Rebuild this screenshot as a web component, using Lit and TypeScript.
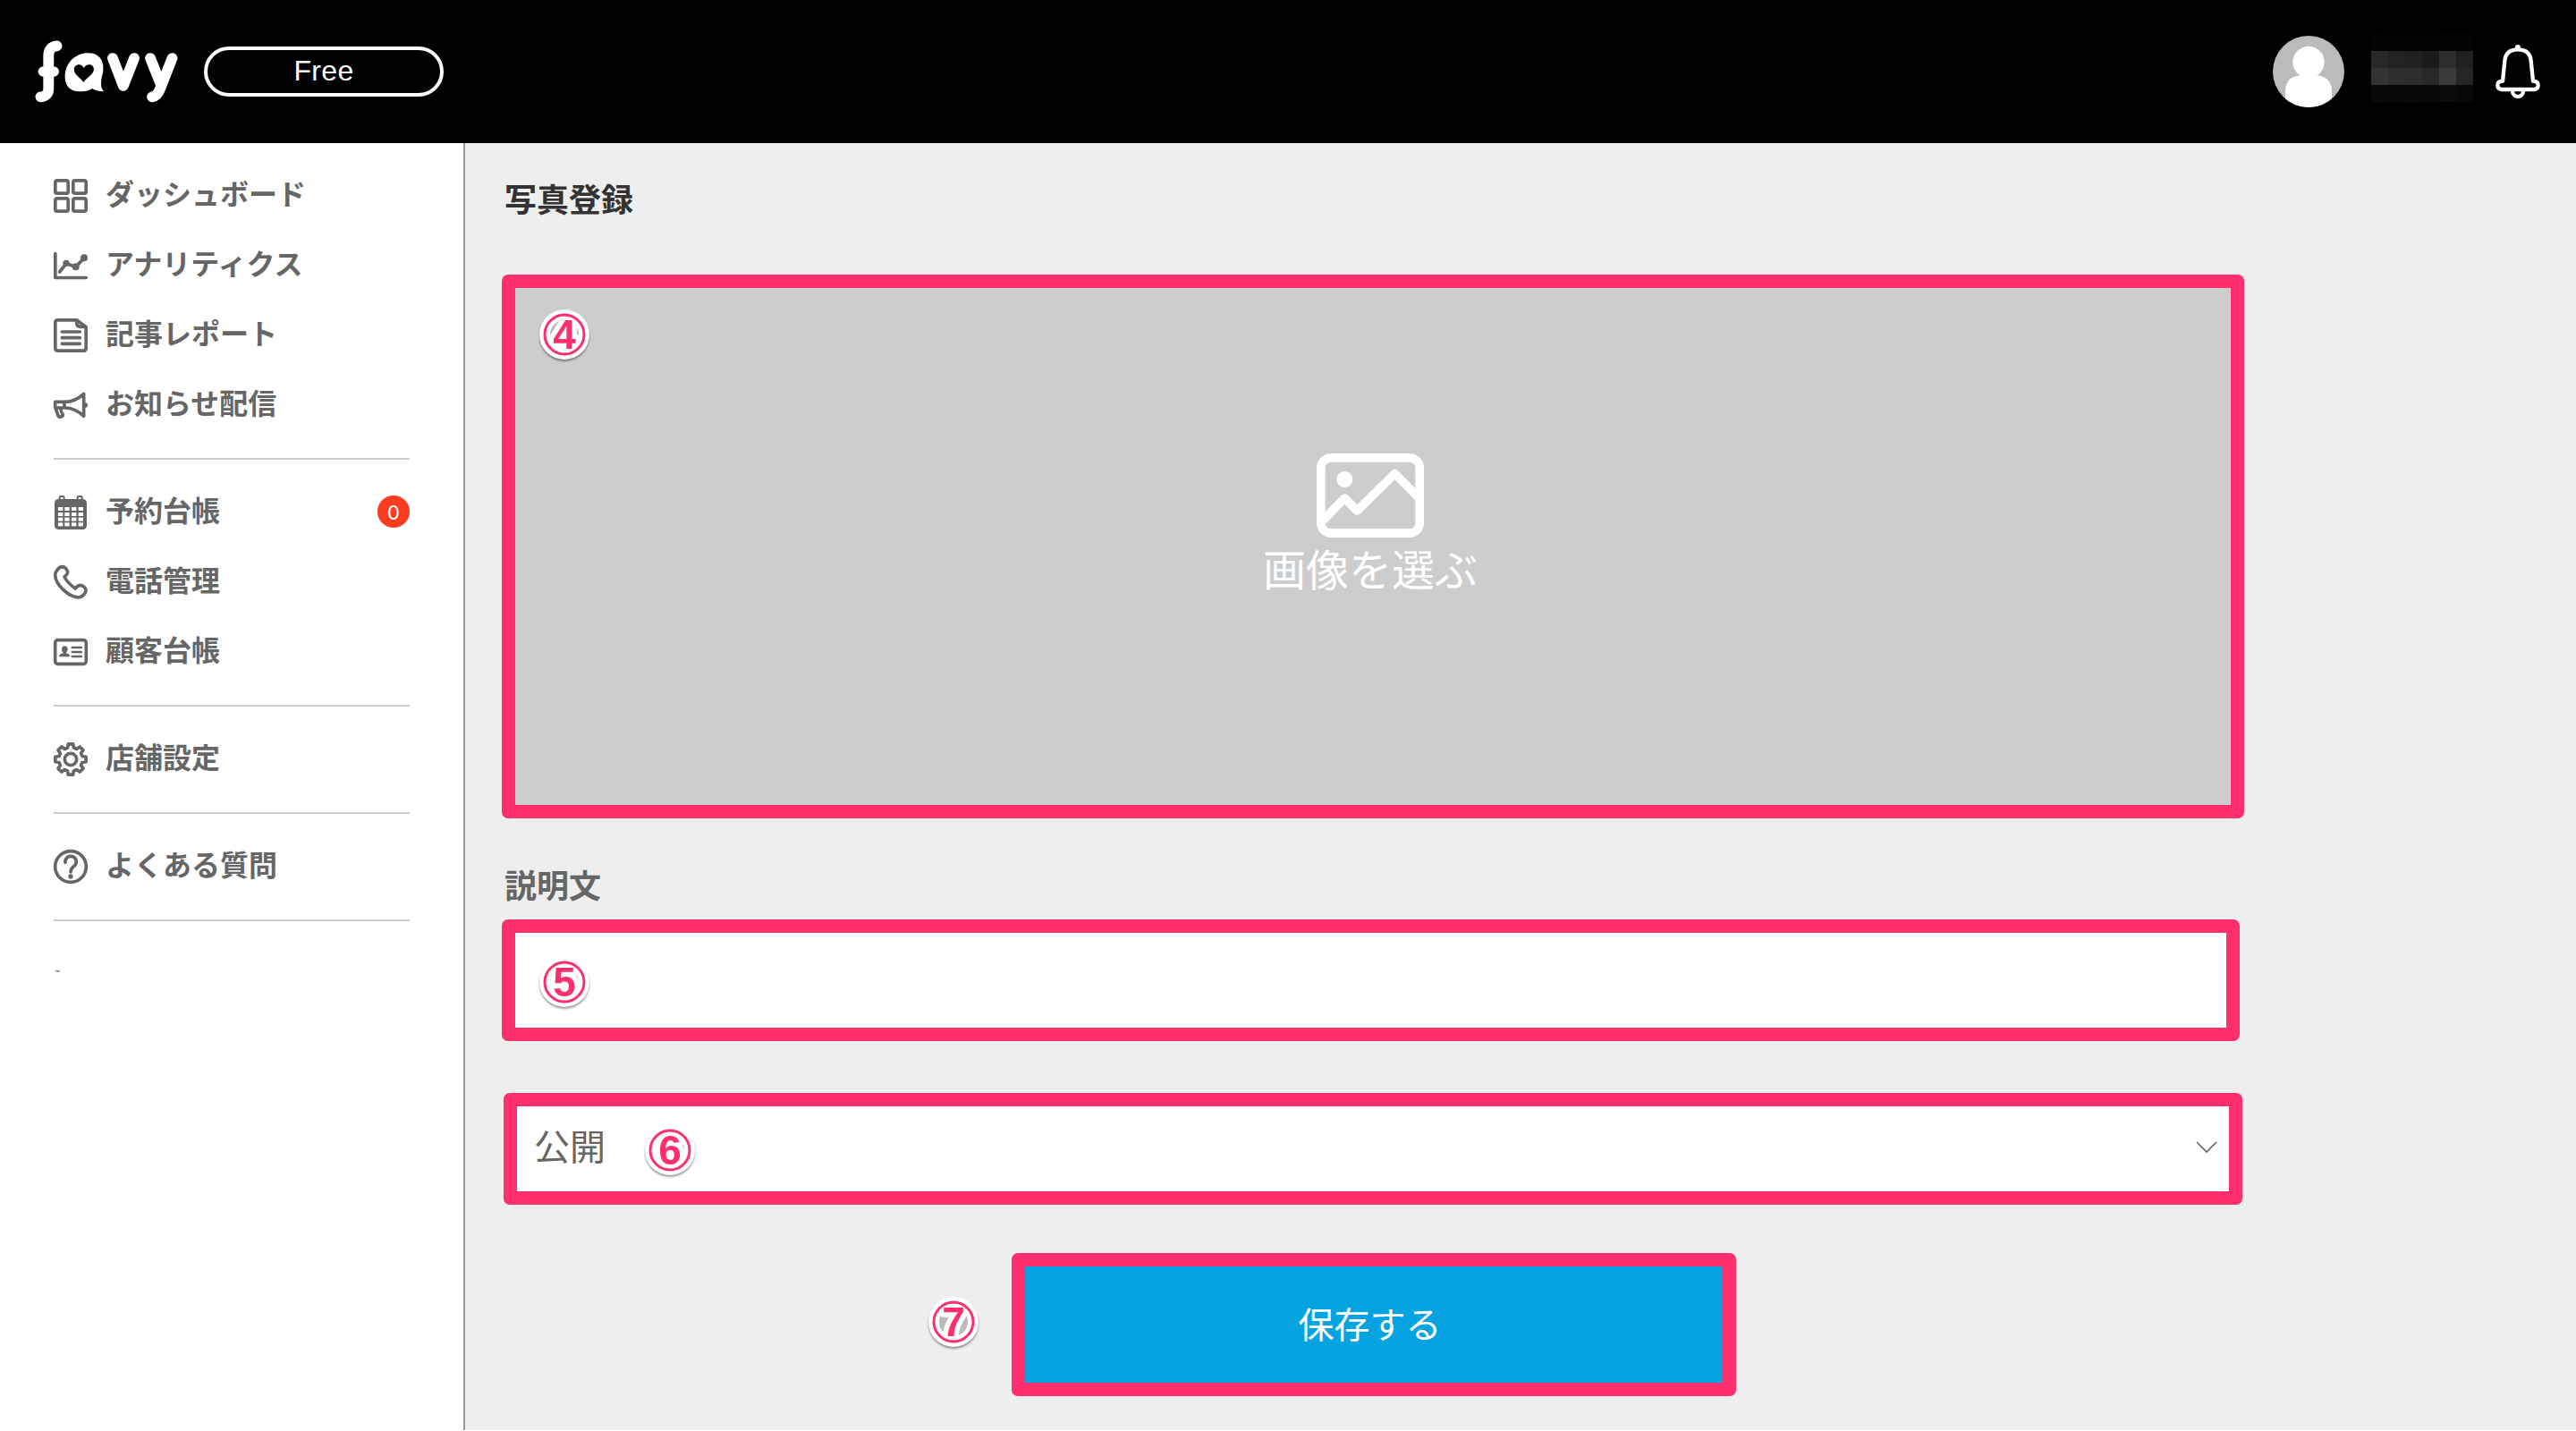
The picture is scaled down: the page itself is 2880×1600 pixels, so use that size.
import { LitElement, html, css, svg, nothing } from 'lit';
import { customElement, property } from 'lit/decorators.js';

// Outline of an eight-toothed gear centred on 57,57
const gearOutline = () => {
  const points: string[] = [];
  for (let i = 0; i < 8; i++) {
    for (const [offset, radius] of [[-15, 40], [-9, 52], [9, 52], [15, 40]]) {
      const a = ((i * 45 + offset) * Math.PI) / 180;
      points.push(`${(57 + radius * Math.sin(a)).toFixed(1)},${(57 - radius * Math.cos(a)).toFixed(1)}`);
    }
  }
  return points.join(' ');
};

const icons: Record<string, unknown> = {
  dashboard: svg`
    <rect x="5.5" y="5.5" width="43" height="43" rx="6" />
    <rect x="65.5" y="5.5" width="43" height="43" rx="6" />
    <rect x="5.5" y="65.5" width="43" height="43" rx="6" />
    <rect x="65.5" y="65.5" width="43" height="43" rx="6" />`,
  analytics: svg`
    <path d="M5.5 17V97.5H109" />
    <path d="M20 78L42 50L74 61L103 31" />
    <g class="fill"><circle cx="42" cy="49" r="11" /><circle cx="74" cy="61" r="12" /><circle cx="102" cy="31" r="12" /></g>`,
  report: svg`
    <path d="M14 5.5H77L108.5 29V100Q108.5 108.5 100 108.5H14Q5.5 108.5 5.5 100V14Q5.5 5.5 14 5.5Z" />
    <path d="M77 7V17Q78 28 90 28H106" />
    <path d="M28 45H88M28 65H88M28 85H88" />`,
  megaphone: svg`
    <path d="M5 46H36V66H5ZM36 46Q70 47 101 19V94Q70 65 36 66M7 68L14 90Q17 98 25 96Q34 92 30 87Q24 81 24 70" />
    <circle class="fill" cx="105" cy="57" r="9" />`,
  calendar: svg`
    <rect class="fill" x="3" y="12" width="108" height="102" rx="13" />
    <path class="thin" d="M20 16V7Q20 3 24 3H31Q35 3 35 7V16M80 16V7Q80 3 84 3H91Q95 3 95 7V16" />
    <g class="hole">
      ${[39, 57, 74, 91].map((y) => [15, 37, 60, 83].map((x) => svg`<rect x=${x} y=${y} width="16" height="12" />`))}
    </g>`,
  phone: svg`
    <path d="M10 19C16 10 24 5 29 5C38 6 46 15 47 24C47 30 42 33 36 39C44 54 58 68 73 78C78 71 82 67 90 67C99 68 108 76 108 85C107 95 95 108 83 108C50 106 6 66 5 33C5 27 6 24 10 19Z" />`,
  customer: svg`
    <rect x="5" y="17" width="104" height="80" rx="9" />
    <g class="fill"><ellipse cx="37" cy="48" rx="10" ry="11" /><path d="M17 73Q19 63 32 61V54H42V61Q53 63 55 73Z" /></g>
    <path class="line" d="M62 42H93M62 57H93M62 72H93" />`,
  gear: svg`<polygon points=${gearOutline()} /><circle cx="57" cy="57" r="20" />`,
  question: svg`
    <circle cx="57" cy="57" r="52" />
    <path d="M39 43A18.5 18.5 0 1 1 69 55Q57 63 57 75" />
    <circle class="fill" cx="57" cy="90" r="8" />`,
};

@customElement('nav-item')
export class NavItem extends LitElement {
  @property() icon = '';
  @property() label = '';
  @property() count?: string;

  static styles = css`
    :host {
      display: flex;
      align-items: center;
      height: 78px;
      color: #666;
    }

    svg {
      width: 38px;
      height: 38px;
      margin-right: 20px;
      overflow: visible;
      fill: none;
      stroke: #666;
      stroke-width: 11;
      stroke-linecap: round;
      stroke-linejoin: round;
    }

    .fill {
      fill: #666;
      stroke: none;
    }

    .hole {
      fill: #fff;
      stroke: none;
    }

    .thin {
      stroke-width: 6;
    }

    .line {
      stroke-width: 7;
    }

    .label {
      flex: 1;
      font-size: 32px;
      font-weight: bold;
      line-height: 44px;
      padding-bottom: 9px;
      white-space: nowrap;
    }

    .count {
      width: 36px;
      height: 36px;
      margin-bottom: 2px;
      border-radius: 50%;
      background: #fb3c22;
      color: #fff;
      font: 22px/38px Inter, sans-serif;
      text-align: center;
    }
  `;

  render() {
    return html`
      <svg viewBox="0 0 114 114">${icons[this.icon]}</svg>
      <span class="label">${this.label}</span>
      ${this.count ? html`<span class="count">${this.count}</span>` : nothing}
    `;
  }
}

@customElement('step-mark')
export class StepMark extends LitElement {
  @property() number = '';

  static styles = css`
    :host {
      position: absolute;
      width: 56px;
      height: 56px;
      filter: drop-shadow(0 2px 1px rgba(0, 0, 0, 0.4));
    }

    svg {
      display: block;
      overflow: visible;
    }

    .disc {
      fill: #fff;
    }

    .shade {
      fill: #bbb;
    }

    .ring {
      fill: none;
      stroke: #ff2f6e;
      stroke-width: 3;
    }

    text {
      fill: #ff2f6e;
      stroke: #fff;
      stroke-width: 11px;
      stroke-linejoin: round;
      paint-order: stroke fill;
      font: bold 46px 'Liberation Sans', sans-serif;
      text-anchor: middle;
    }
  `;

  render() {
    return html`
      <svg width="56" height="56" viewBox="0 0 56 56">
        <circle class="disc" cx="28" cy="28" r="28" />
        <circle class="shade" cx="28" cy="28" r="16" />
        <text x="28" y="44">${this.number}</text>
        <circle class="ring" cx="28" cy="28" r="22" />
      </svg>
    `;
  }
}

const menu = [
  [
    { icon: 'dashboard', label: 'ダッシュボード' },
    { icon: 'analytics', label: 'アナリティクス' },
    { icon: 'report', label: '記事レポート' },
    { icon: 'megaphone', label: 'お知らせ配信' },
  ],
  [
    { icon: 'calendar', label: '予約台帳', count: '0' },
    { icon: 'phone', label: '電話管理' },
    { icon: 'customer', label: '顧客台帳' },
  ],
  [{ icon: 'gear', label: '店舗設定' }],
  [{ icon: 'question', label: 'よくある質問' }],
];

// Grey levels of the masked user name, row by row
const mask = [
  [3, 2, 2, 2, 4, 3],
  [40, 35, 33, 26, 45, 32],
  [51, 46, 46, 40, 58, 37],
  [9, 8, 9, 8, 11, 8],
];

@customElement('app-root')
export class AppRoot extends LitElement {
  static styles = css`
    :host {
      display: flex;
      flex-direction: column;
      width: 2880px;
      height: 1600px;
      box-sizing: border-box;
      border-bottom: 1px solid #fff;
      overflow: hidden;
      background: #eee;
      font-family: 'Noto Sans CJK JP', sans-serif;
    }

    header {
      display: flex;
      align-items: center;
      flex: none;
      height: 160px;
      box-sizing: border-box;
      padding: 0 40px 0 39px;
      background: #000;
      color: #fff;
    }

    .logo {
      flex: none;
      width: 160px;
      height: 70px;
      margin-right: 29px;
      fill: #fff;
    }

    .logo .stroke {
      fill: none;
      stroke: #fff;
      stroke-width: 35;
      stroke-linecap: round;
      stroke-linejoin: round;
    }

    .logo .heart {
      fill: #000;
    }

    .plan {
      width: 268px;
      height: 56px;
      box-sizing: border-box;
      border: 4px solid #fff;
      border-radius: 28px;
      font: 32px/46px 'Liberation Sans', sans-serif;
      letter-spacing: 0.3px;
      text-align: center;
    }

    .user {
      display: flex;
      align-items: center;
      margin-left: auto;
    }

    .avatar {
      width: 80px;
      height: 80px;
      margin-right: 30px;
    }

    .mask {
      display: grid;
      grid-template-columns: repeat(6, 19px);
      grid-auto-rows: 19px;
      margin: 0 25px 8px 0;
    }

    .bell {
      width: 50px;
      height: 60px;
      fill: none;
      stroke: #fff;
      stroke-width: 13;
      stroke-linejoin: round;
    }

    .body {
      display: flex;
      flex: 1;
    }

    nav {
      width: 520px;
      box-sizing: border-box;
      padding: 0 60px;
      border-right: 2px solid #999;
      background: #fff;
    }

    .group {
      padding: 20px 0;
      border-bottom: 2px solid #ccc;
    }

    .speck {
      display: block;
      width: 7px;
      height: 2px;
      margin: 55px 0 0 1px;
      fill: #888;
    }

    main {
      flex: 1;
      padding: 36px 0 0 41px;
    }

    h1,
    h2 {
      margin: 0 0 0 3px;
      height: 54px;
      font-size: 36px;
      line-height: 50px;
      color: #333;
    }

    h2 {
      margin-top: 49px;
      line-height: 48px;
      color: #666;
    }

    .frame {
      position: relative;
      display: flex;
      align-items: center;
      box-sizing: border-box;
      border: 15px solid #ff2f6e;
      border-radius: 7px;
      background: #fff;
    }

    .photo {
      flex-direction: column;
      gap: 3px;
      width: 1948px;
      height: 608px;
      margin-top: 57px;
      padding: 185px 6px 0 0;
      background: #cdcdcd;
      color: #fff;
      font-size: 48px;
      line-height: 60px;
    }

    .photo svg {
      width: 120px;
      height: 94px;
      fill: none;
      stroke: #fff;
      stroke-width: 29;
      stroke-linejoin: round;
    }

    .photo .sun {
      fill: #fff;
      stroke: none;
    }

    .description {
      width: 1943px;
      height: 136px;
      margin-top: 10px;
    }

    .status {
      justify-content: space-between;
      width: 1944px;
      height: 125px;
      margin: 58px 0 0 2px;
      padding: 0 13px 4px 19px;
      color: #666;
      font-size: 40px;
      line-height: 60px;
    }

    .status .value {
      padding-bottom: 5px;
    }

    .status svg {
      width: 24px;
      height: 13px;
      fill: none;
      stroke: #666;
      stroke-width: 1.7;
    }

    .save {
      justify-content: center;
      width: 810px;
      height: 160px;
      margin: 54px 0 0 570px;
      padding: 0 9px 5px 0;
      background: #05a4e0;
      color: #fff;
      font-size: 40px;
    }

    .photo step-mark {
      left: 27px;
      top: 24px;
    }

    .description step-mark {
      left: 27px;
      top: 27px;
    }

    .status step-mark {
      left: 143px;
      top: 21px;
    }

    .save step-mark {
      left: -108px;
      top: 34px;
    }
  `;

  render() {
    return html`
      <header>
        <svg class="logo" viewBox="117 134 471 210" preserveAspectRatio="none">
          <path class="stroke" d="M189 153Q162 156 162 186V295Q162 322 136 324M145 239H179" />
          <path d="M292 177C328 177 342 200 342 228C342 250 335 255 335 280C335 292 338 298 344 306C328 306 314 302 305 296C295 304 277 306 262 306C232 306 216 285 216 258C216 205 255 177 292 177Z" />
          <path class="heart" d="M277 275C270 262 246 250 246 232C246 220 255 216 262 216C270 216 276 221 278 228C281 220 288 216 296 216C304 216 311 222 311 232C311 248 284 262 277 275Z" />
          <path class="stroke" d="M373 194L408 287L444 194" />
          <path class="stroke" d="M497 194L532 284M569 194L532 290Q521 322 503 324" />
        </svg>
        <span class="plan">Free</span>
        <div class="user">
          <svg class="avatar" viewBox="0 0 80 80">
            <clipPath id="round"><circle cx="40" cy="40" r="40" /></clipPath>
            <g clip-path="url(#round)">
              <rect width="80" height="80" fill="#bbb" />
              <circle cx="40" cy="29.5" r="17.7" fill="#fff" />
              <path d="M14 80V63Q14 44 34 44H46Q66 44 66 63V80Z" fill="#fff" />
            </g>
          </svg>
          <div class="mask">
            ${mask.flat().map((v) => html`<i style="background: rgb(${v}, ${v}, ${v})"></i>`)}
          </div>
          <svg class="bell" viewBox="0 0 150 180">
            <circle cx="75" cy="9" r="9" fill="#fff" stroke="none" />
            <path d="M24 122L31 55Q34 16 75 16Q116 16 119 55L126 122C138 122 143 128 143 136C143 145 138 150 128 150H22C12 150 7 145 7 136C7 128 12 122 24 122Z" />
            <path d="M57 152V156A18 18 0 0 0 93 156V152" />
          </svg>
        </div>
      </header>
      <div class="body">
        <nav>
          ${menu.map(
            (group) => html`
              <div class="group">
                ${group.map((item: any) => html`<nav-item .icon=${item.icon} .label=${item.label} .count=${item.count}></nav-item>`)}
              </div>
            `
          )}
          <svg class="speck" viewBox="0 0 7 2"><path d="M0 0H7L4 2H3Z" /></svg>
        </nav>
        <main>
          <h1>写真登録</h1>
          <div class="frame photo">
            <svg viewBox="0 0 360 282">
              <rect x="14.5" y="14.5" width="331" height="253" rx="34" />
              <circle class="sun" cx="94" cy="87" r="27" />
              <path d="M22 224L94 150L136 192L262 68L340 146" />
            </svg>
            <span>画像を選ぶ</span>
            <step-mark number="4"></step-mark>
          </div>
          <h2>説明文</h2>
          <div class="frame description"><step-mark number="5"></step-mark></div>
          <div class="frame status">
            <span class="value">公開</span>
            <svg viewBox="0 0 24 13"><path d="M1 1L12 12L23 1" /></svg>
            <step-mark number="6"></step-mark>
          </div>
          <div class="frame save">
            <span>保存する</span>
            <step-mark number="7"></step-mark>
          </div>
        </main>
      </div>
    `;
  }
}
